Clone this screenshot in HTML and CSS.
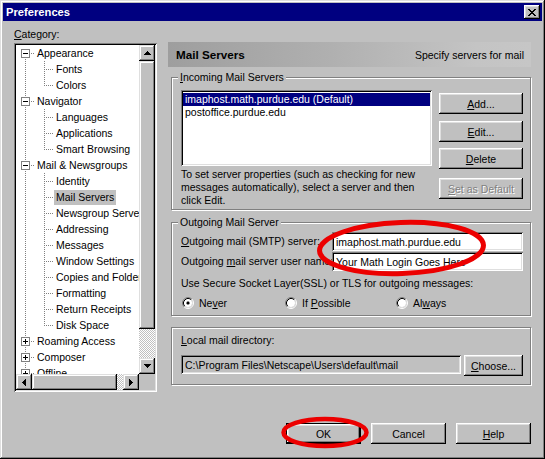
FILE: index.html
```html
<!DOCTYPE html>
<html>
<head>
<meta charset="utf-8">
<title>Preferences</title>
<link rel="stylesheet" href="styles.css">
</head>
<body>
<svg class="defs" width="0" height="0" aria-hidden="true">
  <defs>
    <symbol id="t-l1" viewBox="0 0 38 16"><path d="M9.5 0V16M28.5 0V16M28 8.5H38" stroke="#808080" stroke-dasharray="1 1" fill="none" shape-rendering="crispEdges"/></symbol>
    <symbol id="t-l1last" viewBox="0 0 38 16"><path d="M9.5 0V16M28.5 0V9M28 8.5H38" stroke="#808080" stroke-dasharray="1 1" fill="none" shape-rendering="crispEdges"/></symbol>
    <symbol id="t-first" viewBox="0 0 19 16"><path d="M9.5 14V16M15 8.5H19" stroke="#808080" stroke-dasharray="1 1" fill="none" shape-rendering="crispEdges"/><rect x="5.5" y="4.5" width="8" height="8" fill="#fff" stroke="#808080" shape-rendering="crispEdges"/><path d="M7 8.5H12" stroke="#000" shape-rendering="crispEdges"/></symbol>
    <symbol id="t-minus" viewBox="0 0 19 16"><path d="M9.5 0V4M9.5 14V16M15 8.5H19" stroke="#808080" stroke-dasharray="1 1" fill="none" shape-rendering="crispEdges"/><rect x="5.5" y="4.5" width="8" height="8" fill="#fff" stroke="#808080" shape-rendering="crispEdges"/><path d="M7 8.5H12" stroke="#000" shape-rendering="crispEdges"/></symbol>
    <symbol id="t-plus" viewBox="0 0 19 16"><path d="M9.5 0V4M9.5 14V16M15 8.5H19" stroke="#808080" stroke-dasharray="1 1" fill="none" shape-rendering="crispEdges"/><rect x="5.5" y="4.5" width="8" height="8" fill="#fff" stroke="#808080" shape-rendering="crispEdges"/><path d="M7 8.5H12M9.5 6V11" stroke="#000" shape-rendering="crispEdges"/></symbol>
    <symbol id="radio" viewBox="0 0 12 12"><path d="M2.11 9.89A5.5 5.5 0 0 1 9.89 2.11" stroke="#808080" fill="none"/><path d="M9.89 2.11A5.5 5.5 0 0 1 2.11 9.89" stroke="#fff" fill="none"/><circle cx="6" cy="6" r="4" fill="#fff"/><path d="M2.82 9.18A4.5 4.5 0 0 1 9.18 2.82" stroke="#000" fill="none"/><path d="M9.18 2.82A4.5 4.5 0 0 1 2.82 9.18" stroke="#dfdfdf" fill="none"/></symbol>
  </defs>
</svg>

<div class="window">
  <div class="titlebar">
    <span class="title">Preferences</span>
    <span class="close"><svg width="8" height="7" viewBox="0 0 8 7"><path d="M0 0h2v1H0zM6 0h2v1H6zM1 1h2v1H1zM5 1h2v1H5zM2 2h4v1H2zM3 3h2v1H3zM2 4h4v1H2zM1 5h2v1H1zM5 5h2v1H5zM0 6h2v1H0zM6 6h2v1H6z" fill="#000"/></svg></span>
  </div>

  <div class="content">
    <div class="main">
      <div class="left">
        <div class="cat-label"><u>C</u>ategory:</div>
        <div class="tree">
          <div class="rows">
            <div class="row"><svg class="g0" width="19" height="16"><use href="#t-first"/></svg><span class="tx">Appearance</span></div>
            <div class="row"><svg class="g1" width="38" height="16"><use href="#t-l1"/></svg><span class="tx">Fonts</span></div>
            <div class="row"><svg class="g1" width="38" height="16"><use href="#t-l1last"/></svg><span class="tx">Colors</span></div>
            <div class="row"><svg class="g0" width="19" height="16"><use href="#t-minus"/></svg><span class="tx">Navigator</span></div>
            <div class="row"><svg class="g1" width="38" height="16"><use href="#t-l1"/></svg><span class="tx">Languages</span></div>
            <div class="row"><svg class="g1" width="38" height="16"><use href="#t-l1"/></svg><span class="tx">Applications</span></div>
            <div class="row"><svg class="g1" width="38" height="16"><use href="#t-l1last"/></svg><span class="tx">Smart Browsing</span></div>
            <div class="row"><svg class="g0" width="19" height="16"><use href="#t-minus"/></svg><span class="tx">Mail &amp; Newsgroups</span></div>
            <div class="row"><svg class="g1" width="38" height="16"><use href="#t-l1"/></svg><span class="tx">Identity</span></div>
            <div class="row"><svg class="g1" width="38" height="16"><use href="#t-l1"/></svg><span class="tx sel">Mail Servers</span></div>
            <div class="row"><svg class="g1" width="38" height="16"><use href="#t-l1"/></svg><span class="tx">Newsgroup Servers</span></div>
            <div class="row"><svg class="g1" width="38" height="16"><use href="#t-l1"/></svg><span class="tx">Addressing</span></div>
            <div class="row"><svg class="g1" width="38" height="16"><use href="#t-l1"/></svg><span class="tx">Messages</span></div>
            <div class="row"><svg class="g1" width="38" height="16"><use href="#t-l1"/></svg><span class="tx">Window Settings</span></div>
            <div class="row"><svg class="g1" width="38" height="16"><use href="#t-l1"/></svg><span class="tx">Copies and Folders</span></div>
            <div class="row"><svg class="g1" width="38" height="16"><use href="#t-l1"/></svg><span class="tx">Formatting</span></div>
            <div class="row"><svg class="g1" width="38" height="16"><use href="#t-l1"/></svg><span class="tx">Return Receipts</span></div>
            <div class="row"><svg class="g1" width="38" height="16"><use href="#t-l1last"/></svg><span class="tx">Disk Space</span></div>
            <div class="row"><svg class="g0" width="19" height="16"><use href="#t-plus"/></svg><span class="tx">Roaming Access</span></div>
            <div class="row"><svg class="g0" width="19" height="16"><use href="#t-plus"/></svg><span class="tx">Composer</span></div>
            <div class="row"><svg class="g0" width="19" height="16"><use href="#t-plus"/></svg><span class="tx">Offline</span></div>
          </div>
          <div class="vscroll">
            <div class="sbtn"><svg width="7" height="4" viewBox="0 0 7 4"><path d="M3 0h1v1h1v1h1v1h1v1H0V3h1V2h1V1h1z" fill="#000"/></svg></div>
            <div class="vthumb"></div>
            <div class="track"></div>
            <div class="sbtn"><svg width="7" height="4" viewBox="0 0 7 4"><path d="M0 0h7v1H6v1H5v1H4v1H3V3H2V2H1V1H0z" fill="#000"/></svg></div>
          </div>
          <div class="hscroll">
            <div class="sbtn"><svg width="4" height="7" viewBox="0 0 4 7"><path d="M3 0h1v7H3V6H2V5H1V4H0V3h1V2h1V1h1z" fill="#000"/></svg></div>
            <div class="hthumb"></div>
            <div class="track"></div>
            <div class="sbtn"><svg width="4" height="7" viewBox="0 0 4 7"><path d="M0 0h1v1h1v1h1v1h1v1H3v1H2v1H1v1H0z" fill="#000"/></svg></div>
          </div>
          <div class="corner"></div>
        </div>
      </div>

      <div class="right">
        <div class="header"><b>Mail Servers</b><span>Specify servers for mail</span></div>

        <div class="group g-in">
          <div class="group-title"><u>I</u>ncoming Mail Servers</div>
          <div class="inc-body">
            <div class="inc-left">
              <div class="listbox">
                <div class="li sel">imaphost.math.purdue.edu (Default)</div>
                <div class="li">postoffice.purdue.edu</div>
              </div>
              <div class="inc-note">To set server properties (such as checking for new<br>messages automatically), select a server and then<br>click Edit.</div>
            </div>
            <div class="btncol">
              <div class="btn b-add"><u>A</u>dd...</div>
              <div class="btn b-edit"><u>E</u>dit...</div>
              <div class="btn b-del"><u>D</u>elete</div>
              <div class="btn b-def disabled"><u>S</u>et as Default</div>
            </div>
          </div>
        </div>

        <div class="group g-out">
          <div class="group-title">Outgoing Mail Server</div>
          <div class="out-body">
            <div class="frow r1">
              <div class="flabel"><u>O</u>utgoing mail (SMTP) server:</div>
              <div class="field">imaphost.math.purdue.edu</div>
            </div>
            <div class="frow r2">
              <div class="flabel">Outgoing <u>m</u>ail server user name:</div>
              <div class="field">Your Math Login Goes Here</div>
            </div>
            <div class="ssl">Use Secure Socket Layer(SSL) or TLS for outgoing messages:</div>
            <div class="radios">
              <div class="radio"><svg width="12" height="12" viewBox="0 0 12 12"><use href="#radio"/><rect x="5" y="5" width="2" height="2" fill="#000"/><rect x="4.5" y="4.5" width="3" height="3" rx="1.2" fill="#000"/></svg><span>Ne<u>v</u>er</span></div>
              <div class="radio"><svg width="12" height="12" viewBox="0 0 12 12"><use href="#radio"/></svg><span>If <u>P</u>ossible</span></div>
              <div class="radio"><svg width="12" height="12" viewBox="0 0 12 12"><use href="#radio"/></svg><span>Al<u>w</u>ays</span></div>
            </div>
          </div>
        </div>

        <div class="group g-local">
          <div class="llabel"><u>L</u>ocal mail directory:</div>
          <div class="lrow">
            <div class="field dis">C:\Program Files\Netscape\Users\default\mail</div>
            <div class="btn choose"><u>C</u>hoose...</div>
          </div>
        </div>
      </div>
    </div>

    <div class="footer">
      <div class="btn fbtn ok">OK</div>
      <div class="btn fbtn">Cancel</div>
      <div class="btn fbtn"><u>H</u>elp</div>
    </div>
  </div>

  <svg class="marks" width="545" height="459" viewBox="0 0 545 459" aria-hidden="true">
    <ellipse cx="401.5" cy="248" rx="82" ry="25.5" fill="none" stroke="#ec0000" stroke-width="5" transform="rotate(-2 401.5 248)"/>
    <ellipse cx="325" cy="432.5" rx="41.5" ry="13.5" fill="none" stroke="#ec0000" stroke-width="4.5"/>
  </svg>
</div>
</body>
</html>
```

FILE: styles.css
```css
* { box-sizing: border-box; }
html, body { margin: 0; padding: 0; }
body {
  font-family: "Liberation Sans", Arial, sans-serif;
  font-size: 10.5px;
  color: #000;
  background: #c0c0c0;
}
u { text-decoration: underline; text-underline-offset: 1px; }
.defs { display: block; width: 0; height: 0; overflow: hidden; }

.window {
  position: relative;
  width: 545px;
  height: 459px;
  padding: 3px;
  background: #c0c0c0;
  box-shadow: inset -1px -1px #000, inset 1px 1px #dfdfdf, inset -2px -2px #808080, inset 2px 2px #fff;
}

.titlebar {
  height: 18px;
  background: #000080;
  display: flex;
  align-items: center;
  justify-content: space-between;
  padding: 0 2px 0 3px;
}
.title { color: #fff; font-weight: bold; font-size: 11.2px; line-height: 18px; }
.close {
  width: 16px; height: 14px;
  display: flex; align-items: center; justify-content: center;
  background: #c0c0c0;
  box-shadow: inset -1px -1px #000, inset 1px 1px #fff, inset -2px -2px #808080, inset 2px 2px #dfdfdf;
}

.content { padding: 7px 11px 0; }
.main { display: flex; gap: 11px; }

.left { width: 143px; }
.cat-label { height: 13px; line-height: 13px; }
.tree {
  margin-top: 2px;
  height: 349px;
  padding: 2px;
  background: #fff;
  box-shadow: inset 1px 1px #808080, inset -1px -1px #fff, inset 2px 2px #000, inset -2px -2px #dfdfdf;
  display: grid;
  grid-template-columns: 123px 16px;
  grid-template-rows: 329px 16px;
}
.rows { overflow: hidden; }
.row { display: flex; height: 16px; white-space: nowrap; }
.row svg { flex: none; display: block; }
.tx { padding: 0 2px; line-height: 15px; height: 15px; margin-top: 1px; }
.tx.sel { background: #c0c0c0; }

.vscroll { display: flex; flex-direction: column; background: #c0c0c0; }
.hscroll { display: flex; background: #c0c0c0; }
.sbtn, .vthumb, .hthumb {
  background: #c0c0c0;
  box-shadow: inset -1px -1px #000, inset 1px 1px #dfdfdf, inset -2px -2px #808080, inset 2px 2px #fff;
}
.sbtn { width: 16px; height: 16px; flex: none; display: flex; align-items: center; justify-content: center; }
.sbtn svg { display: block; }
.vthumb { height: 268px; flex: none; }
.hthumb { width: 85px; flex: none; }
.track {
  flex: 1;
  background-color: #c0c0c0;
  background-image: repeating-conic-gradient(#fff 0 25%, #c0c0c0 0 50%);
  background-size: 2px 2px;
}
.corner { background: #c0c0c0; }

.right { width: 363px; }
.header {
  margin-top: 14px;
  height: 25px;
  display: flex;
  align-items: center;
  justify-content: space-between;
  padding: 0 7px 0 8px;
  background: linear-gradient(90deg, #9e9e9e 0%, #b0b0b0 45%, #c4c4c4 85%, #c6c6c6 100%);
}
.header b { font-size: 11.7px; }

.group {
  margin-left: 3px;
  width: 360px;
  border: 1px solid #808080;
  box-shadow: inset 1px 1px #fff, 1px 1px #fff;
}
.group-title {
  display: table;
  margin: -7px 0 0 6px;
  padding: 0 2px;
  line-height: 13px;
  background: #c0c0c0;
}

.g-in { margin-top: 10px; height: 133px; }
.inc-body {
  display: grid;
  grid-template-columns: 251px 84px;
  column-gap: 7px;
  margin: 6px 0 0 9px;
}
.listbox {
  height: 76px;
  padding: 3px 2px;
  background: #fff;
  box-shadow: inset 1px 1px #808080, inset -1px -1px #fff, inset 2px 2px #000, inset -2px -2px #dfdfdf;
}
.li { height: 13px; line-height: 13px; padding-left: 2px; white-space: nowrap; }
.li.sel { background: #000080; color: #fff; }
.inc-note { margin-top: 2px; line-height: 13px; white-space: nowrap; }

.btncol { display: flex; flex-direction: column; }
.btn {
  height: 21px;
  display: flex;
  align-items: center;
  justify-content: center;
  background: #c0c0c0;
  white-space: nowrap;
  box-shadow: inset -1px -1px #000, inset 1px 1px #fff, inset -2px -2px #808080, inset 2px 2px #dfdfdf;
}
.b-add { margin-top: 3px; }
.b-edit { margin-top: 7px; }
.b-del { margin-top: 6px; }
.b-def { margin-top: 9px; }
.disabled { color: #808080; text-shadow: 1px 1px 0 #fff; }

.g-out { margin-top: 12px; height: 94px; }
.out-body { padding: 0 7px 0 9px; }
.frow { display: flex; height: 19px; }
.r1 { margin-top: 3px; }
.r2 { margin-top: 1px; }
.flabel { width: 151px; flex: none; white-space: nowrap; overflow: hidden; line-height: 19px; }
.field {
  flex: 1;
  height: 19px;
  display: flex;
  align-items: center;
  padding: 0 4px;
  white-space: nowrap;
  overflow: hidden;
  background: #fff;
  box-shadow: inset 1px 1px #808080, inset -1px -1px #fff, inset 2px 2px #000, inset -2px -2px #dfdfdf;
}
.ssl { margin-top: 6px; line-height: 13px; }
.radios {
  margin-top: 6px;
  height: 14px;
  display: grid;
  grid-template-columns: 103px 111px auto;
}
.radio { display: flex; align-items: center; gap: 5px; }
.radio svg { display: block; margin-left: 1px; flex: none; }

.g-local { margin-top: 11px; height: 58px; padding: 6px 7px 0 9px; }
.llabel { line-height: 13px; }
.lrow { display: flex; align-items: flex-start; gap: 3px; margin-top: 8px; }
.field.dis { flex: none; width: 280px; background: #c0c0c0; }
.choose { width: 59px; }

.footer { display: flex; justify-content: flex-end; gap: 10px; margin-top: 31px; }
.fbtn { width: 75px; }
.ok {
  box-shadow: inset 0 0 0 1px #000, inset -2px -2px #000, inset 2px 2px #fff, inset -3px -3px #808080, inset 3px 3px #dfdfdf;
}

.marks { position: absolute; left: 0; top: 0; pointer-events: none; }
```
